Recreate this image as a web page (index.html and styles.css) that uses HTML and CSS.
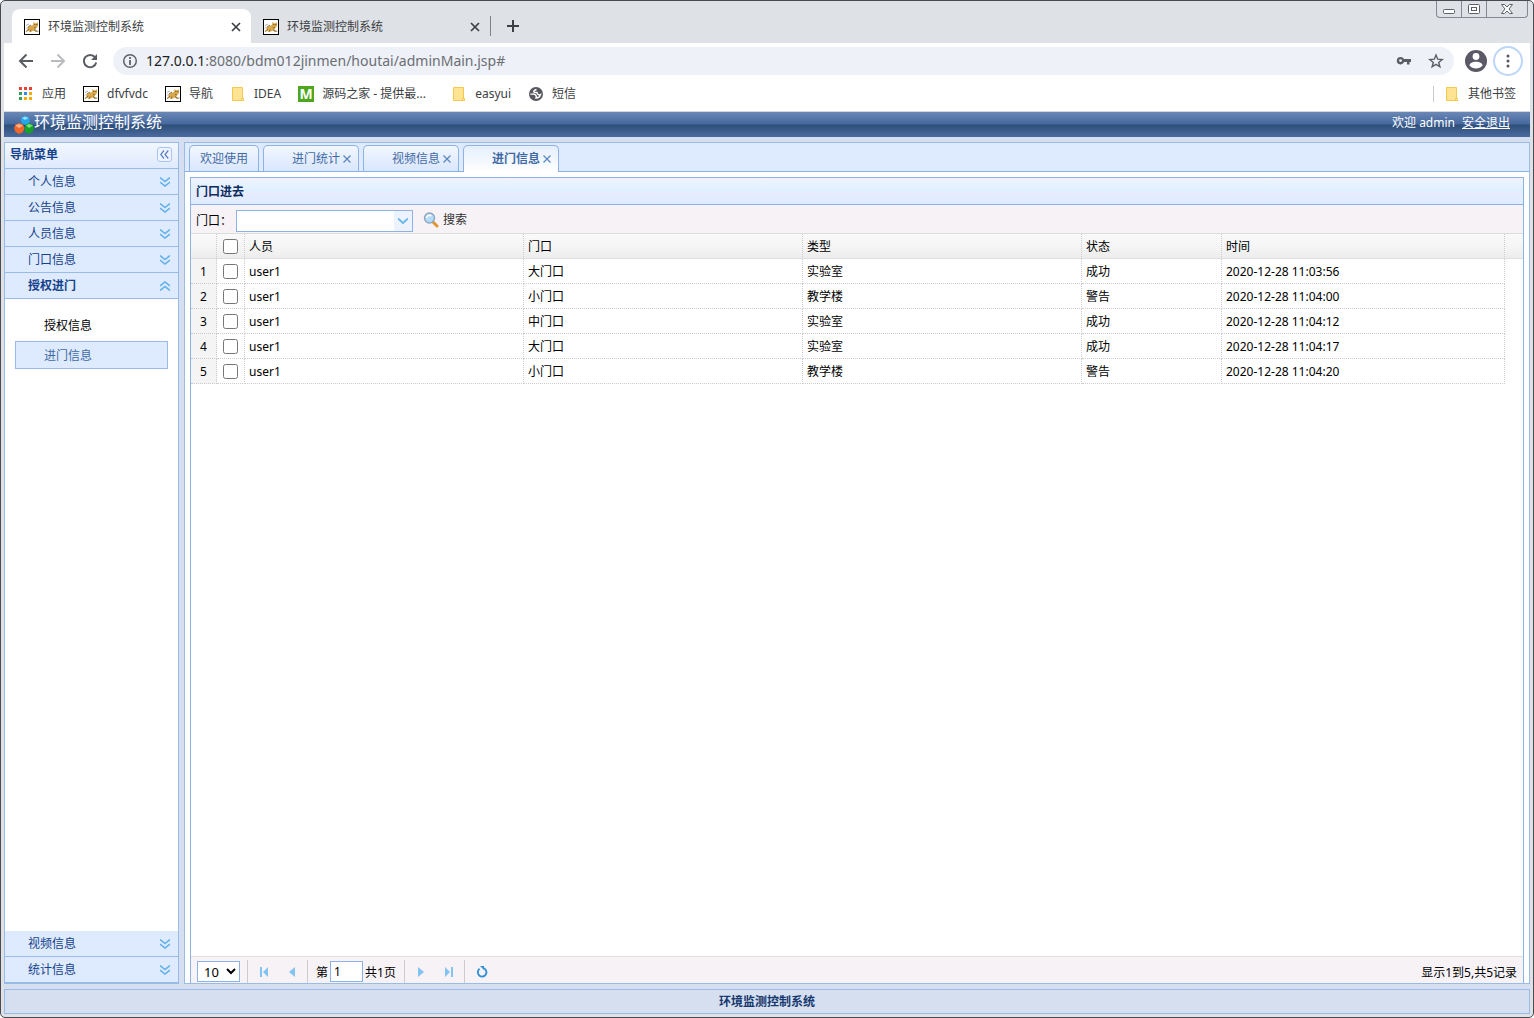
FILE: index.html
```html
<!DOCTYPE html>
<html lang="zh-CN">
<head>
<meta charset="utf-8">
<title>环境监测控制系统</title>
<link rel="stylesheet" href="styles.css">
</head>
<body>
<svg class="defs" aria-hidden="true">
  <symbol id="cat" viewBox="0 0 16 16">
    <rect x=".5" y=".5" width="15" height="15" fill="#fff" stroke="#000"/>
    <path d="M1.500 13l2.500-2.500L3 9l3-2 3-1 .5-3 1.500 1.200h1.500L14 3v4l-1.500 2L11 10l3.500 3H12l-2.500-1.500L7 13H5l1-1.500z" fill="#d9a84c"/>
    <path d="M2 12.500l3-2.500M4 8l3-2M7 10.500L6 12.500M10 10.500l2.500 2M10 8.500l2 .500" stroke="#8a6a38" fill="none"/>
    <path d="M2 6.500L5 5M2 9.500L3.500 8M12 12h2.500" stroke="#8f959c" stroke-width=".8"/>
    <path d="M10.500 5.500h.800M12.500 5.500h.800" stroke="#4d3614"/>
  </symbol>
  <symbol id="folder" viewBox="0 0 16 16">
    <path d="M2.500 1.500h10v11h1v2h-11z" fill="#fee492" stroke="#f2c94c"/>
    <path d="M11.500 14.500v-2h2v2z" fill="#fff0b8" stroke="#f2c94c"/>
  </symbol>
  <symbol id="close" viewBox="0 0 10 10">
    <path d="M1 1l8 8M9 1l-8 8" stroke="currentColor" stroke-width="1.700"/>
  </symbol>
  <symbol id="tabclose" viewBox="0 0 8 8">
    <path d="M.500.500l7 7M7.500.500l-7 7" stroke="#5a85c0" stroke-width="1.200"/>
  </symbol>
  <symbol id="down" viewBox="0 0 10 10">
    <path d="M0 .500l5 4 5-4M0 5l5 4 5-4" fill="none" stroke="#5fb0ec" stroke-width="1.500"/>
  </symbol>
  <symbol id="up" viewBox="0 0 10 10">
    <path d="M0 5l5-4 5 4M0 9.500l5-4 5 4" fill="none" stroke="#5fb0ec" stroke-width="1.500"/>
  </symbol>
</svg>

<div class="window">
  <div class="titlebar">
    <div class="browser-tab browser-tab-on">
      <svg class="i16"><use href="#cat"/></svg><span class="browser-tab-name">环境监测控制系统</span>
      <button class="plain" aria-label="关闭标签页"><svg class="i10"><use href="#close"/></svg></button>
    </div>
    <div class="browser-tab">
      <svg class="i16"><use href="#cat"/></svg><span class="browser-tab-name">环境监测控制系统</span>
      <button class="plain" aria-label="关闭标签页"><svg class="i10"><use href="#close"/></svg></button>
    </div>
    <span class="tab-rule"></span>
    <button class="plain new-tab" aria-label="新标签页"><svg width="12" height="12" viewBox="0 0 12 12"><path d="M6 0v12M0 6h12" stroke="#3c4043" stroke-width="2"/></svg></button>
    <div class="win-buttons">
      <button class="win-btn" aria-label="最小化"><svg width="14" height="14" viewBox="0 0 14 14"><rect x="1.500" y="7.500" width="11" height="4" rx="1" fill="#fff" stroke="#5c5f66"/></svg></button>
      <button class="win-btn" aria-label="最大化"><svg width="14" height="14" viewBox="0 0 14 14"><rect x="1.500" y="2.500" width="11" height="9" rx="1" fill="#fff" stroke="#5c5f66"/><rect x="4.500" y="5.500" width="5" height="3" fill="#fff" stroke="#5c5f66"/></svg></button>
      <button class="win-btn win-btn-close" aria-label="关闭"><svg width="14" height="14" viewBox="0 0 14 14"><path d="M1.500 2.500h3L7 5l2.500-2.500h3L9 7l3.500 4.500h-3L7 9l-2.500 2.500h-3L5 7z" fill="#fff" stroke="#5c5f66"/></svg></button>
    </div>
  </div>

  <div class="toolbar">
    <button class="plain nav-btn" aria-label="后退"><svg width="16" height="16" viewBox="0 0 16 16"><path d="M15 8H2M8.500 1.500L2 8l6.500 6.500" fill="none" stroke="#5a5d63" stroke-width="2"/></svg></button>
    <button class="plain nav-btn" aria-label="前进"><svg width="16" height="16" viewBox="0 0 16 16"><path d="M1 8h13M7.500 1.500L14 8l-6.500 6.500" fill="none" stroke="#babcbe" stroke-width="2"/></svg></button>
    <button class="plain nav-btn" aria-label="刷新"><svg width="16" height="16" viewBox="0 0 16 16"><path d="M13 4.200A6.200 6.200 0 1 0 14.200 9.500" fill="none" stroke="#5a5d63" stroke-width="2"/><path d="M15 1v6H9z" fill="#5a5d63"/></svg></button>
    <div class="omnibox">
      <svg width="16" height="16" viewBox="0 0 16 16"><circle cx="8" cy="8" r="6.300" fill="none" stroke="#5f6368" stroke-width="1.500"/><path d="M8 7v5M8 4v2" stroke="#5f6368" stroke-width="1.800"/></svg>
      <div class="url"><span class="url-host">127.0.0.1</span>:8080/bdm012jinmen/houtai/adminMain.jsp#</div>
      <button class="plain" aria-label="密码"><svg width="16" height="16" viewBox="0 0 16 16"><path d="M4.500 4a3.700 3.700 0 1 0 3.500 5h3v2.500h2.500V9H15V6H8A3.700 3.700 0 0 0 4.500 4z" fill="#5a5d63"/><circle cx="4.500" cy="7.600" r="1.400" fill="#eef1f7"/></svg></button>
      <button class="plain" aria-label="收藏"><svg width="16" height="16" viewBox="0 0 16 16"><path d="M8 2l1.700 4.200 4.500.300-3.500 2.900 1.200 4.400L8 11.400l-3.900 2.400 1.200-4.400-3.500-2.900 4.500-.300z" fill="none" stroke="#5a5d63" stroke-width="1.400"/></svg></button>
    </div>
    <button class="plain" aria-label="用户"><svg width="22" height="22" viewBox="0 0 22 22"><circle cx="11" cy="11" r="11" fill="#5b5966"/><circle cx="11" cy="6.500" r="3.400" fill="#fff"/><path d="M4.500 15.500c0-5 13-5 13 0-3 4-10 4-13 0z" fill="#fff"/></svg></button>
    <button class="more" aria-label="更多"><svg width="4" height="14" viewBox="0 0 4 14"><circle cx="2" cy="2" r="1.500"/><circle cx="2" cy="7" r="1.500"/><circle cx="2" cy="12" r="1.500"/></svg></button>
  </div>

  <nav class="bookmarks">
    <a href="#"><svg class="i16" viewBox="0 0 16 16"><path d="M1 1h3v3H1zM6 1h3v3H6zM11 1h3v3h-3z" fill="#ea4335"/><path d="M1 6h3v3H1zM1 11h3v3H1z" fill="#34a05a"/><path d="M6 6h3v3H6z" fill="#2f8cf0"/><path d="M11 6h3v3h-3zM6 11h3v3H6zM11 11h3v3h-3z" fill="#f9ab00"/></svg>应用</a>
    <a href="#"><svg class="i16"><use href="#cat"/></svg>dfvfvdc</a>
    <a href="#"><svg class="i16"><use href="#cat"/></svg>导航</a>
    <a href="#"><svg class="i16"><use href="#folder"/></svg>IDEA</a>
    <a href="#" class="bookmark-long"><span class="m-icon">M</span>源码之家 - 提供最...</a>
    <a href="#"><svg class="i16"><use href="#folder"/></svg>easyui</a>
    <a href="#"><svg class="i16" viewBox="0 0 16 16"><circle cx="8" cy="8" r="7" fill="#56565f"/><path d="M2.500 8c1.500.500 3-.500 4.500.500S9 10 8 12c2 0 4-1.500 4.500-3.500C11 9.500 8.500 8 9 6.500c-1-.500-2 .500-3-.500s1-2 2.500-2.500" fill="none" stroke="#fff" stroke-width="1.400"/></svg>短信</a>
    <span class="bookmark-rule"></span>
    <a href="#"><svg class="i16"><use href="#folder"/></svg>其他书签</a>
  </nav>

  <div class="app">
    <header class="app-head">
      <svg width="20" height="20" viewBox="0 0 20 20">
        <path d="M11 0l3.500 1L16 4l-1 3.500L11.500 9 8 7.500 6.500 4 8 1z" fill="#25a7ea"/><path d="M8 2l3-1.500L14.500 2 11 4z" fill="#8fe0fc"/>
        <path d="M5 7l4 1.500 1.500 3.500L9 16l-4 2-3.500-2L0 12l1.500-3.500z" fill="#f2672a"/><path d="M1.500 9.500L5 8l4 1.500L5 12z" fill="#ffb58a"/>
        <path d="M15 7l3.500 1.500L20 12l-1.500 4-4 2-3.500-2-.500-4L12 8.500z" fill="#17a02c"/><path d="M12 9.500L15 8l4 1.500-4 2.500z" fill="#74e07a"/>
      </svg>
      <h1>环境监测控制系统</h1>
      <span class="welcome">欢迎 admin</span>
      <a href="#">安全退出</a>
    </header>

    <div class="app-body">
      <aside class="side">
        <div class="side-title">导航菜单
          <button class="collapse" aria-label="折叠"><svg width="9" height="9" viewBox="0 0 9 9"><path d="M4 .500L.700 4.500 4 8.500M8.300.500L5 4.500 8.300 8.500" fill="none" stroke="#5a7fc0" stroke-width="1.200"/></svg></button>
        </div>
        <button class="side-item">个人信息<svg class="i10"><use href="#down"/></svg></button>
        <button class="side-item">公告信息<svg class="i10"><use href="#down"/></svg></button>
        <button class="side-item">人员信息<svg class="i10"><use href="#down"/></svg></button>
        <button class="side-item">门口信息<svg class="i10"><use href="#down"/></svg></button>
        <button class="side-item side-item-on">授权进门<svg class="i10"><use href="#up"/></svg></button>
        <div class="side-links">
          <a href="#">授权信息</a>
          <a href="#" class="on">进门信息</a>
        </div>
        <button class="side-item">视频信息<svg class="i10"><use href="#down"/></svg></button>
        <button class="side-item">统计信息<svg class="i10"><use href="#down"/></svg></button>
      </aside>

      <main class="main">
        <div class="tabs">
          <div class="tab"><a href="#">欢迎使用</a></div>
          <div class="tab tab-closable"><a href="#">进门统计</a><button class="plain" aria-label="关闭"><svg class="i8"><use href="#tabclose"/></svg></button></div>
          <div class="tab tab-closable"><a href="#">视频信息</a><button class="plain" aria-label="关闭"><svg class="i8"><use href="#tabclose"/></svg></button></div>
          <div class="tab tab-closable tab-on"><a href="#">进门信息</a><button class="plain" aria-label="关闭"><svg class="i8"><use href="#tabclose"/></svg></button></div>
        </div>
        <section class="panel">
          <h2>门口进去</h2>
          <form class="search">
            <label for="door">门口：</label>
            <span class="combo"><input id="door" type="text"><button type="button" aria-label="展开"><svg width="10" height="6" viewBox="0 0 10 6"><path d="M0 .500l5 4.500 5-4.500" fill="none" stroke="#6db8ec" stroke-width="2"/></svg></button></span>
            <button type="button" class="search-btn"><svg width="16" height="16" viewBox="0 0 16 16"><path d="M9.500 9.500l4.500 4.500" stroke="#e2952f" stroke-width="3" stroke-linecap="round"/><circle cx="6.500" cy="6" r="5" fill="#b5dcfa" stroke="#8ea6bd" stroke-width="1.400"/><path d="M3.500 6a3 3 0 0 1 5-2" fill="none" stroke="#fff" stroke-width="1.500"/></svg>搜索</button>
          </form>
          <div class="grid">
            <table>
              <colgroup><col class="c-num"><col class="c-check"><col><col><col><col class="c-state"><col class="c-time"><col class="c-gutter"></colgroup>
              <thead>
                <tr><th></th><th><input type="checkbox" aria-label="全选"></th><th>人员</th><th>门口</th><th>类型</th><th>状态</th><th>时间</th><th></th></tr>
              </thead>
              <tbody>
                <tr><td>1</td><td><input type="checkbox" aria-label="选择第1行"></td><td>user1</td><td>大门口</td><td>实验室</td><td>成功</td><td>2020-12-28 11:03:56</td><td></td></tr>
                <tr><td>2</td><td><input type="checkbox" aria-label="选择第2行"></td><td>user1</td><td>小门口</td><td>教学楼</td><td>警告</td><td>2020-12-28 11:04:00</td><td></td></tr>
                <tr><td>3</td><td><input type="checkbox" aria-label="选择第3行"></td><td>user1</td><td>中门口</td><td>实验室</td><td>成功</td><td>2020-12-28 11:04:12</td><td></td></tr>
                <tr><td>4</td><td><input type="checkbox" aria-label="选择第4行"></td><td>user1</td><td>大门口</td><td>实验室</td><td>成功</td><td>2020-12-28 11:04:17</td><td></td></tr>
                <tr><td>5</td><td><input type="checkbox" aria-label="选择第5行"></td><td>user1</td><td>小门口</td><td>教学楼</td><td>警告</td><td>2020-12-28 11:04:20</td><td></td></tr>
              </tbody>
            </table>
          </div>
          <div class="pager">
            <select aria-label="每页条数"><option>10</option><option>20</option></select>
            <span class="pager-group">
              <button class="plain" aria-label="首页"><svg class="i10" viewBox="0 0 10 10"><path d="M1 0h2v10H1zM9 0v10L4 5z" fill="#83c3f0"/></svg></button>
              <button class="plain" aria-label="上一页"><svg class="i10" viewBox="0 0 10 10"><path d="M8 0v10L2 5z" fill="#83c3f0"/></svg></button>
            </span>
            <span class="pager-group pager-page"><label for="page">第</label><input id="page" type="text" value="1"><span>共1页</span></span>
            <span class="pager-group">
              <button class="plain" aria-label="下一页"><svg class="i10" viewBox="0 0 10 10"><path d="M2 0v10l6-5z" fill="#83c3f0"/></svg></button>
              <button class="plain" aria-label="末页"><svg class="i10" viewBox="0 0 10 10"><path d="M7 0h2v10H7zM1 0v10l5-5z" fill="#83c3f0"/></svg></button>
            </span>
            <span class="pager-group">
              <button class="plain" aria-label="刷新"><svg width="12" height="12" viewBox="0 0 12 12"><path d="M7.500 2.200A4.300 4.300 0 1 1 3.600 2.800" fill="none" stroke="#3391d8" stroke-width="1.900"/><path d="M4 0h4v4z" fill="#3391d8"/></svg></button>
            </span>
            <span class="pager-info">显示1到5,共5记录</span>
          </div>
        </section>
      </main>
    </div>
    <footer class="foot">环境监测控制系统</footer>
  </div>
</div>
</body>
</html>
```
FILE: styles.css
```css
* { box-sizing: border-box; }

body {
  margin: 0;
  font: 12px/16px "Noto Sans", "Noto Sans CJK SC", sans-serif;
  color: #000;
  background: #fff;
}

button, input, select { font: inherit; color: inherit; margin: 0; }
a { color: inherit; text-decoration: none; }
svg { flex: none; display: block; }

.defs { position: absolute; width: 0; height: 0; }
.i16 { width: 16px; height: 16px; }
.i10 { width: 10px; height: 10px; }
.i8 { width: 8px; height: 8px; }
.plain { display: flex; padding: 0; border: 0; background: none; }

.window {
  display: flex;
  flex-direction: column;
  height: 100vh;
  min-height: 500px;
  padding: 0 3px 3px;
  border: 1px solid #4a4a50;
  border-radius: 5px;
  background: #dee1e6;
}

/* Browser title bar */
.titlebar {
  display: flex;
  align-items: flex-end;
  height: 42px;
  padding-left: 8px;
}
.browser-tab {
  display: flex;
  align-items: center;
  width: 239px;
  height: 34px;
  padding: 2px 10px 0 12px;
  border-radius: 8px 8px 0 0;
  color: #3c4043;
}
.browser-tab-on { background: #fff; }
.browser-tab-name { flex: 1; padding-left: 8px; }
.tab-rule { width: 1px; height: 20px; margin-bottom: 7px; background: #808388; }
.new-tab { margin: 0 0 11px 16px; }
.win-buttons {
  display: flex;
  align-self: flex-start;
  margin: 0 2px 0 auto;
  border: 1px solid #85888e;
  border-top: 0;
  border-radius: 0 0 4px 4px;
}
.win-btn {
  display: flex;
  align-items: center;
  justify-content: center;
  width: 25px;
  height: 16px;
  padding: 0;
  border: 0;
  border-right: 1px solid #85888e;
  background: none;
}
.win-btn-close { width: 40px; border-right: 0; }

/* Address bar */
.toolbar {
  display: flex;
  align-items: center;
  height: 36px;
  padding: 0 7px 0 14px;
  background: #fff;
}
.nav-btn { margin-right: 16px; }
.omnibox {
  display: flex;
  align-items: center;
  flex: 1;
  gap: 16px;
  height: 28px;
  margin: 0 11px 0 -1px;
  padding: 0 10px 0 9px;
  border-radius: 14px;
  background: #eef1f7;
}
.url { flex: 1; margin-left: -8px; font-size: 14px; line-height: 20px; color: #6b6e74; }
.url-host { color: #202124; }
.more {
  display: flex;
  align-items: center;
  justify-content: center;
  width: 30px;
  height: 30px;
  margin-left: 6px;
  padding: 0;
  border: 2px solid #bcd5fa;
  border-radius: 50%;
  background: #fff;
  fill: #55585e;
}

/* Bookmarks */
.bookmarks {
  display: flex;
  align-items: center;
  gap: 17px;
  height: 33px;
  padding: 0 14px 3px;
  border-bottom: 1px solid #d5d8dc;
  background: #fff;
  color: #3c4043;
}
.bookmarks a { display: flex; align-items: center; gap: 8px; white-space: nowrap; }
.bookmark-long { width: 136px; }
.m-icon {
  width: 16px;
  height: 16px;
  background: #4ea51f;
  color: #fff;
  font-size: 14px;
  font-weight: bold;
  text-align: center;
}
.bookmark-rule { width: 1px; height: 16px; margin: 0 -7px 0 auto; background: #c8cacd; }

/* Application */
.app {
  display: flex;
  flex-direction: column;
  flex: 1;
  min-height: 0;
  background: #d5dff0;
}
.app-head {
  display: flex;
  align-items: center;
  height: 25px;
  padding: 0 20px 0 10px;
  background: linear-gradient(#6b88b5, #46689f 48%, #2d4f78 52%, #4b6b9f);
  color: #fff;
}
.app-head svg { margin-top: 3px; }
.app-head h1 { flex: 1; margin: 0; padding-bottom: 5px; font-size: 16px; line-height: 20px; font-weight: normal; }
.app-head span, .app-head a { padding-bottom: 3px; }
.app-head a { margin-left: 7px; text-decoration: underline; }
.app-body {
  display: flex;
  flex: 1;
  gap: 5px;
  min-height: 0;
  padding: 5px 0;
}

/* Side menu */
.side {
  display: flex;
  flex-direction: column;
  width: 175px;
  border: 1px solid #99bbe8;
  background: #fff;
}
.side-title, .side-item {
  display: flex;
  align-items: center;
  justify-content: space-between;
  flex: none;
  width: 100%;
  height: 26px;
  border: 0;
  border-bottom: 1px solid #99bbe8;
  color: #15428b;
}
.side-title {
  padding: 0 6px 2px 5px;
  background: linear-gradient(#f2f7ff, #dfeafd);
  font-weight: bold;
}
.side-item { padding: 0 8px 0 23px; background: #deeafd; }
.side-item-on { font-weight: bold; }
.collapse {
  display: flex;
  align-items: center;
  justify-content: center;
  width: 15px;
  height: 15px;
  padding: 0;
  border: 1px solid #a9c4ee;
  border-radius: 3px;
  background: #eef4ff;
}
.side-links { flex: 1; min-height: 0; overflow: auto; padding: 12px 10px; }
.side-links a {
  display: block;
  height: 28px;
  margin-bottom: 2px;
  padding: 6px 0 4px 28px;
  border: 1px solid transparent;
}
.side-links .on { border-color: #99bbe8; background: #deeafd; color: #416aa3; }

/* Main tabs */
.main {
  display: flex;
  flex-direction: column;
  flex: 1;
  min-width: 0;
  border: 1px solid #99bbe8;
  background: #fff;
}
.tabs {
  display: flex;
  flex: none;
  gap: 4px;
  height: 29px;
  padding: 2px 4px 0;
  border-bottom: 1px solid #8db2e3;
  background: #deeafd;
}
.tab {
  display: flex;
  align-items: center;
  gap: 3px;
  height: 26px;
  padding: 0 10px;
  border: 1px solid #8db2e3;
  border-bottom: 0;
  border-radius: 5px 5px 0 0;
  background: linear-gradient(#f2f7ff, #d9e6fd);
  color: #416aa3;
}
.tab-closable { padding: 0 7px 0 28px; }
.tab-on { height: 27px; background: linear-gradient(#e4effd, #fff); font-weight: bold; }

/* Data panel */
.panel {
  display: flex;
  flex-direction: column;
  flex: 1;
  min-height: 0;
  margin: 5px 5px 0;
  border: 1px solid #8db2e3;
  border-bottom: 0;
}
.panel h2 {
  flex: none;
  height: 27px;
  margin: 0;
  padding: 6px 5px 4px;
  border-bottom: 1px solid #8db2e3;
  background: linear-gradient(#eff4ff, #e0f0ff 50%, #e8ecfd 60%, #dcecff);
  color: #0e2d5f;
  font-size: 12px;
  line-height: 16px;
}
.search {
  display: flex;
  align-items: center;
  flex: none;
  height: 29px;
  padding: 2px 5px 0;
  border-bottom: 1px solid #ddd;
  background: #f7f2f6;
}
.search label { width: 40px; font-family: "Noto Sans CJK TC", sans-serif; }
.combo { display: flex; width: 177px; height: 22px; margin-top: 2px; border: 1px solid #8db2e3; background: #fff; }
.combo input { flex: 1; min-width: 0; padding: 0 4px; border: 0; background: none; }
.combo button {
  display: flex;
  align-items: center;
  justify-content: center;
  width: 18px;
  padding: 0;
  border: 0;
  background: #ecf2ff;
}
.search-btn {
  display: flex;
  align-items: center;
  gap: 4px;
  margin-left: 10px;
  padding: 0;
  border: 0;
  background: none;
  color: #333;
}

.grid { flex: 1; min-height: 0; overflow: auto; }
table { width: 100%; table-layout: fixed; border-collapse: separate; border-spacing: 0; }
.c-num { width: 26px; }
.c-check { width: 28px; }
.c-state { width: 140px; }
.c-time { width: 283px; }
.c-gutter { width: 18px; }
th, td {
  height: 25px;
  padding: 2px 4px 0;
  border-right: 1px dotted #ccc;
  border-bottom: 1px dotted #ccc;
  font-weight: normal;
  line-height: 16px;
  text-align: left;
}
thead { background: linear-gradient(#f9f9f9, #f5f5f5 50%, #ececec); }
th { border-bottom: 1px solid #ddd; }
tr > :first-child { padding: 2px 0 0; text-align: center; }
tr > :nth-child(2) { padding: 0; }
td:first-child { background: #f4f4f4; }
th:last-child { border-right: 0; }
td:last-child { border: 0; }
.grid input { display: block; width: 15px; height: 15px; margin: 0 auto; }

/* Pager */
.pager {
  display: flex;
  align-items: center;
  flex: none;
  height: 27px;
  padding: 0 6px;
  border-top: 1px solid #ddd;
  background: #f7f2f6;
}
.pager select {
  width: 43px;
  height: 21px;
  margin: 2px 7px 0 0;
  padding: 0 2px;
  border: 1px solid #8db2e3;
  border-radius: 0;
  background-color: #fff;
  font-size: 13px;
}
.pager-group {
  display: flex;
  align-items: center;
  gap: 18px;
  height: 23px;
  margin-top: 3px;
  padding: 0 10px 0 11px;
  border-left: 1px solid #ccc;
}
.pager-page { gap: 2px; padding: 0 8px; }
.pager-page label, .pager-page span { padding-top: 2px; }
.pager-page input { width: 33px; height: 21px; padding: 0 3px; border: 1px solid #8db2e3; background: #fff; }
.pager-info { margin-left: auto; padding-top: 5px; }

.foot {
  flex: none;
  height: 25px;
  border: 1px solid #99bbe8;
  color: #15386e;
  font-weight: bold;
  line-height: 23px;
  text-align: center;
}
```
